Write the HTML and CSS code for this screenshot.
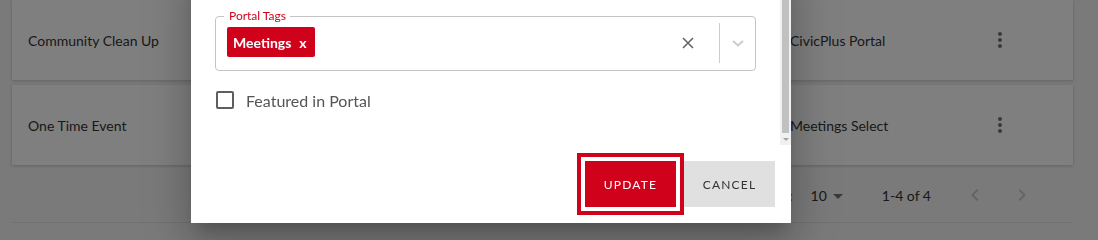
FILE: index.html
```html
<!DOCTYPE html>
<html lang="en">
<head>
<meta charset="utf-8">
<title>Edit Event</title>
<link rel="stylesheet" href="styles.css">
</head>
<body>
<div class="page">
  <div class="list">
    <div class="row">
      <div class="cell name">Community Clean Up</div>
      <div class="cell type">CivicPlus Portal</div>
      <div class="cell menu">
        <svg viewBox="0 0 24 24" width="24" height="24"><path d="M12 8c1.1 0 2-.9 2-2s-.9-2-2-2-2 .9-2 2 .9 2 2 2zm0 2c-1.1 0-2 .9-2 2s.9 2 2 2 2-.9 2-2-.9-2-2-2zm0 6c-1.1 0-2 .9-2 2s.9 2 2 2 2-.9 2-2-.9-2-2-2z"/></svg>
      </div>
    </div>
    <div class="row">
      <div class="cell name">One Time Event</div>
      <div class="cell type">Meetings Select</div>
      <div class="cell menu">
        <svg viewBox="0 0 24 24" width="24" height="24"><path d="M12 8c1.1 0 2-.9 2-2s-.9-2-2-2-2 .9-2 2 .9 2 2 2zm0 2c-1.1 0-2 .9-2 2s.9 2 2 2 2-.9 2-2-.9-2-2-2zm0 6c-1.1 0-2 .9-2 2s.9 2 2 2 2-.9 2-2-.9-2-2-2z"/></svg>
      </div>
    </div>
    <div class="paginator">
      <span class="pg-label">Items per page:</span>
      <span class="pg-select"><span>10</span><span class="caret"></span></span>
      <span class="pg-range">1-4 of 4</span>
      <span class="pg-btn"><svg viewBox="0 0 24 24" width="24" height="24"><path d="M15.41 7.41L14 6l-6 6 6 6 1.41-1.41L10.83 12z"/></svg></span>
      <span class="pg-btn"><svg viewBox="0 0 24 24" width="24" height="24"><path d="M10 6L8.59 7.41 13.17 12l-4.58 4.59L10 18l6-6z"/></svg></span>
    </div>
  </div>
</div>

<div class="backdrop"></div>

<div class="dialog">
  <div class="dialog-body">
    <div class="dialog-content">
      <fieldset class="tags-field">
        <legend>Portal Tags</legend>
        <div class="tags-row">
          <div class="chips">
            <span class="chip"><span class="chip-text">Meetings</span><span class="chip-x">x</span></span>
          </div>
          <span class="clear-icon">
            <svg viewBox="0 0 12 12" width="12" height="12"><path d="M1 1L11 11M11 1L1 11" stroke="#666" stroke-width="1.6" fill="none"/></svg>
          </span>
          <span class="separator"></span>
          <span class="chevron">
            <svg viewBox="0 0 12 7" width="12" height="7"><path d="M1 1L6 5.5L11 1" stroke="#cccccc" stroke-width="2" fill="none"/></svg>
          </span>
        </div>
      </fieldset>
      <label class="check-row">
        <span class="checkbox"></span>
        <span class="check-label">Featured in Portal</span>
      </label>
    </div>
    <div class="scrollbar">
      <div class="thumb"></div>
      <div class="arrow"><span class="arrow-tri"></span></div>
    </div>
  </div>
  <div class="dialog-footer">
    <button class="btn btn-primary">Update</button>
    <button class="btn btn-secondary">Cancel</button>
  </div>
</div>
</body>
</html>
```

FILE: styles.css
```css
* { box-sizing: border-box; }

html, body {
  margin: 0;
  padding: 0;
  height: 100%;
  overflow: hidden;
}

body {
  background: #f4f4f4;
  font-family: Lato, "Liberation Sans", sans-serif;
  color: #333;
}

.page {
  padding: 0 25px 0 12px;
}

.list {
  width: 1061px;
}

.row {
  display: grid;
  grid-template-columns: 762px 196px 28px;
  align-items: center;
  height: 80px;
  padding-left: 16px;
  background: #ffffff;
  box-shadow: 0 1px 3px rgba(0, 0, 0, 0.2);
  margin-bottom: 5px;
  font-size: 14px;
  color: #333;
}

.row + .row {
  margin-bottom: 0;
}

.cell.menu {
  display: flex;
  align-items: center;
  justify-content: center;
}

.cell.menu svg {
  fill: #737373;
}

.paginator {
  display: flex;
  align-items: center;
  justify-content: flex-end;
  height: 58px;
  padding: 3px 31px 0 0;
  border-bottom: 1px solid #e2e2e2;
  font-size: 14px;
  color: #333;
}

.pg-select {
  display: flex;
  align-items: center;
  margin-left: 18px;
}

.caret {
  width: 0;
  height: 0;
  margin-left: 6px;
  margin-top: 2px;
  border-left: 5px solid transparent;
  border-right: 5px solid transparent;
  border-top: 5px solid #757575;
}

.pg-range {
  margin-left: 39px;
  margin-right: 24px;
}

.pg-btn {
  width: 40px;
  height: 40px;
  display: flex;
  align-items: center;
  justify-content: center;
}

.pg-btn + .pg-btn {
  margin-left: 7px;
}

.pg-btn svg {
  fill: #c8c8c8;
}

.backdrop {
  position: fixed;
  inset: 0;
  background: rgba(0, 0, 0, 0.5);
  z-index: 1;
}

.dialog {
  position: absolute;
  left: 191px;
  top: -40px;
  width: 600px;
  background: #fff;
  z-index: 2;
  box-shadow: 0 11px 15px -7px rgba(0, 0, 0, 0.2),
              0 24px 38px 3px rgba(0, 0, 0, 0.14),
              0 9px 46px 8px rgba(0, 0, 0, 0.12);
}

.dialog-body {
  display: flex;
  height: 185px;
}

.dialog-content {
  flex: 1;
  padding: 49px 24px 0;
}

.tags-field {
  margin: 0;
  padding: 0 0 7px 11px;
  border: 1px solid #c4c4c4;
  border-radius: 4px;
  min-width: 0;
}

.tags-field legend {
  margin-left: -3px;
  padding: 0 4px 0 5px;
  font-size: 12px;
  line-height: 14px;
  color: #d0021b;
}

.tags-row {
  display: flex;
  align-items: flex-start;
  height: 40px;
}

.chips {
  flex: 1;
  display: flex;
}

.chip {
  display: flex;
  align-items: center;
  height: 30px;
  margin-top: 4px;
  padding: 0 8px 0 6px;
  background: #d0021b;
  border-radius: 2px;
  color: #fff;
}

.chip-text {
  font-size: 14px;
  font-weight: 700;
}

.chip-x {
  margin-left: 8px;
  font-size: 14px;
  font-weight: 700;
}

.clear-icon {
  display: flex;
  align-items: center;
  justify-content: center;
  width: 20px;
  height: 40px;
  margin-right: 21px;
}

.separator {
  width: 1px;
  height: 40px;
  background: #cccccc;
}

.chevron {
  display: flex;
  align-items: center;
  justify-content: center;
  width: 35px;
  height: 40px;
}

.check-row {
  display: flex;
  align-items: center;
  height: 20px;
  margin-top: 19px;
}

.checkbox {
  width: 18px;
  height: 18px;
  margin-left: 1px;
  border: 2px solid #5f5f5f;
  border-radius: 2px;
}

.check-label {
  margin-left: 12px;
  font-size: 16px;
  color: #555;
}

.scrollbar {
  width: 11px;
  display: flex;
  flex-direction: column;
  background: #f1f1f1;
}

.thumb {
  flex: 1;
  margin: 0 2px;
  background: #c1c1c1;
}

.arrow {
  height: 12px;
  display: flex;
  align-items: center;
  justify-content: center;
}

.arrow-tri {
  width: 0;
  height: 0;
  border-left: 3px solid transparent;
  border-right: 3px solid transparent;
  border-top: 3px solid #a3a3a3;
}

.dialog-footer {
  display: flex;
  justify-content: flex-end;
  gap: 8px;
  padding: 16px;
}

.btn {
  width: 91px;
  height: 46px;
  border: none;
  border-radius: 0;
  font-family: Lato, "Liberation Sans", sans-serif;
  font-size: 12px;
  letter-spacing: 1.2px;
  text-transform: uppercase;
  cursor: pointer;
}

.btn-primary {
  background: #d0021b;
  color: #fff;
  outline: 4px solid #d0021b;
  outline-offset: 4px;
}

.btn-secondary {
  background: #e0e0e0;
  color: #333;
}
```
